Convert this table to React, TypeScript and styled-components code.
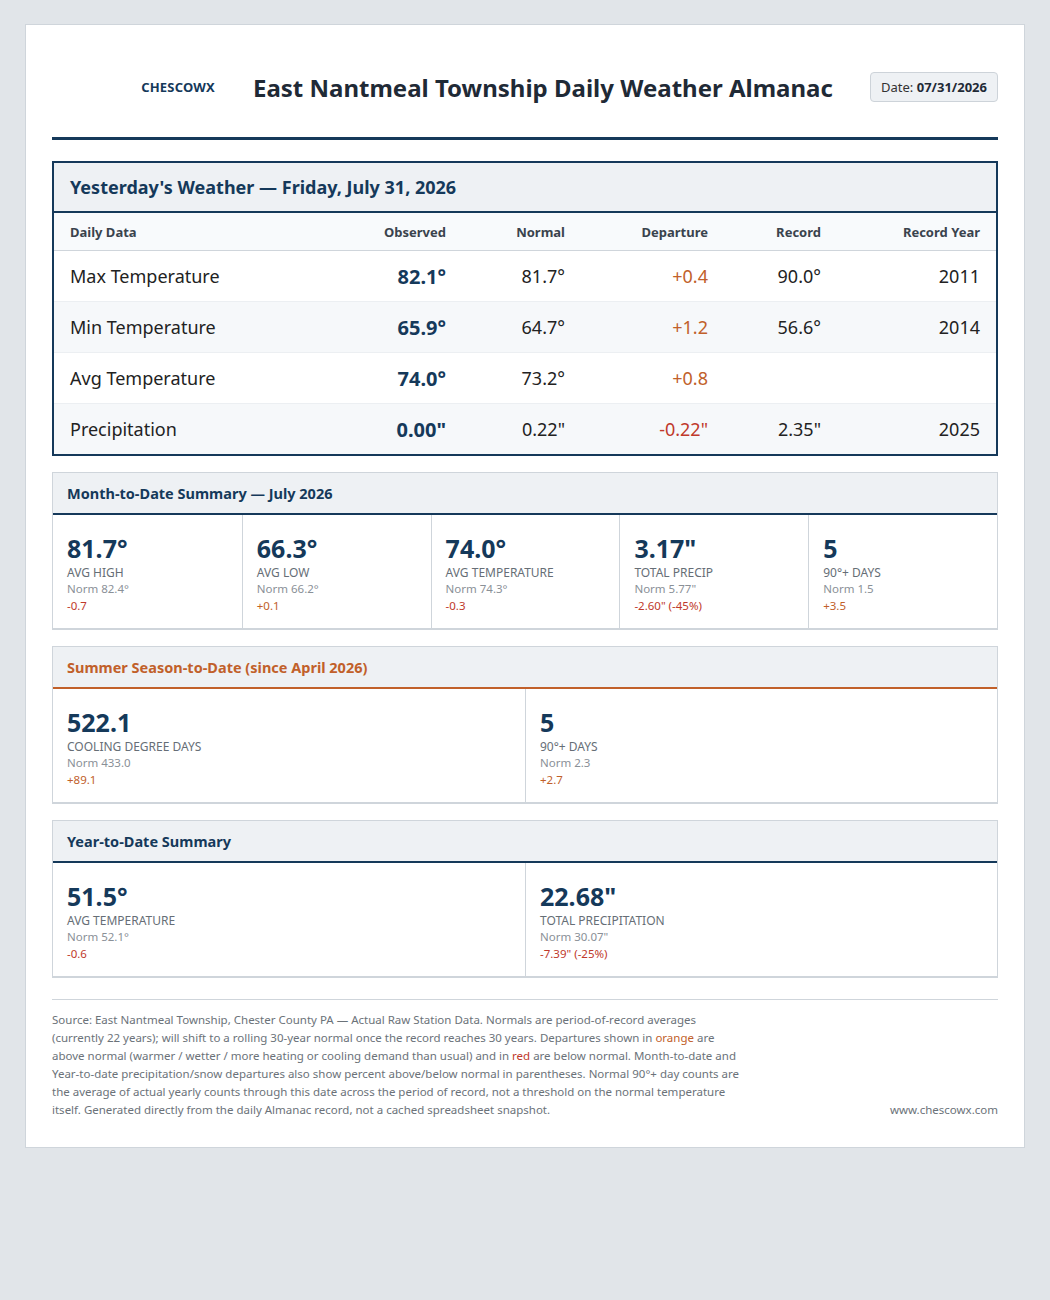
import React from "react";
import styled, { createGlobalStyle } from "styled-components";

const GlobalStyle = createGlobalStyle`
  body {
    margin: 0;
    background: #e1e5e9;
    font-family: "Noto Sans", "Open Sans", sans-serif;
    color: #1f2a36;
  }
`;

const NAVY = "#15395a";
const ORANGE = "#c1602a";
const RED = "#c0392b";

const Page = styled.div`
  padding: 24px 25px 150px;
`;

const Card = styled.div`
  background: #fff;
  border: 1px solid #cfd5db;
  padding: 28px 26px 28px 26px;
`;

const Header = styled.header`
  display: flex;
  align-items: center;
  padding-bottom: 16px;
  border-bottom: 3px solid ${NAVY};
  margin-bottom: 21px;
`;

const Logo = styled.div`
  width: 163px;
  height: 68px;
  display: flex;
  align-items: center;
  justify-content: flex-end;
  font-size: 13px;
  font-weight: 700;
  color: ${NAVY};
  letter-spacing: 0.2px;
`;

const Title = styled.h1`
  flex: 1;
  margin: 0 0 0 38px;
  font-size: 24px;
  font-weight: 700;
  color: #1f2a36;
`;

const DateBadge = styled.div`
  background: #eef1f4;
  border: 1px solid #cdd3d9;
  border-radius: 4px;
  padding: 5px 10px;
  font-size: 13px;
  color: #333;
  b {
    color: #1f2a36;
  }
`;

const Box = styled.section<{ $strong?: boolean }>`
  border: ${(p) => (p.$strong ? `2px solid ${NAVY}` : "1px solid #cfd5db")};
  ${(p) => (p.$strong ? "" : "border-bottom-width: 2px;")}
  margin-bottom: 16px;
`;

const BoxHead = styled.div<{ $accent: string; $big?: boolean }>`
  background: #eef1f4;
  border-bottom: 2px solid ${(p) => p.$accent};
  color: ${(p) => p.$accent};
  font-weight: 700;
  font-size: ${(p) => (p.$big ? "18px" : "14.5px")};
  line-height: ${(p) => (p.$big ? "25px" : "21px")};
  padding: ${(p) => (p.$big ? "12px 16px 11px" : "10px 14px 9px")};
`;

const TableGrid = styled.div`
  display: grid;
  grid-template-columns: 1fr 121px 119px 143px 113px 159px;
`;

const HeadCell = styled.div<{ $left?: boolean }>`
  background: #f8fafc;
  border-bottom: 1px solid #cfd5db;
  font-size: 13px;
  font-weight: 700;
  color: #3a434d;
  padding: 10px 16px 9px;
  text-align: ${(p) => (p.$left ? "left" : "right")};
`;

const Cell = styled.div<{ $left?: boolean; $alt?: boolean; $color?: string; $bold?: boolean; $last?: boolean }>`
  background: ${(p) => (p.$alt ? "#f6f8fa" : "#fff")};
  border-bottom: ${(p) => (p.$last ? "none" : "1px solid #eceff2")};
  height: 50px;
  padding: 0 16px;
  display: flex;
  align-items: center;
  justify-content: ${(p) => (p.$left ? "flex-start" : "flex-end")};
  font-size: ${(p) => (p.$bold ? "20px" : "18px")};
  font-weight: ${(p) => (p.$bold ? 700 : 400)};
  color: ${(p) => p.$color || "#222"};
`;

const Stats = styled.div<{ $cols: number }>`
  display: grid;
  grid-template-columns: repeat(${(p) => p.$cols}, 1fr);
`;

const Stat = styled.div`
  padding: 18px 14px 13px;
  border-left: 1px solid #cfd5db;
  &:first-child {
    border-left: none;
  }
`;

const Value = styled.div`
  font-size: 25px;
  font-weight: 700;
  color: ${NAVY};
  line-height: 30px;
`;

const Label = styled.div`
  font-size: 12px;
  color: #666e76;
  text-transform: uppercase;
  line-height: 16px;
  margin-top: 2px;
`;

const Norm = styled.div`
  font-size: 11.5px;
  color: #8a9097;
  line-height: 16px;
`;

const Dep = styled.div<{ $color: string }>`
  font-size: 11.5px;
  color: ${(p) => p.$color};
  line-height: 18px;
`;

const Footer = styled.footer`
  border-top: 1px solid #cfd5db;
  margin-top: 21px;
  padding-top: 11px;
  display: flex;
  justify-content: space-between;
  align-items: flex-end;
`;

const Note = styled.p`
  margin: 0;
  max-width: 688px;
  font-size: 11.5px;
  line-height: 18px;
  color: #6b7279;
`;

const Site = styled.div`
  font-size: 11.5px;
  color: #6b7279;
  line-height: 18px;
`;

const Hi = styled.span<{ $color: string }>`
  color: ${(p) => p.$color};
`;

type Row = { label: string; obs: string; norm: string; dep: string; rec: string; year: string };

const rows: Row[] = [
  { label: "Max Temperature", obs: "82.1°", norm: "81.7°", dep: "+0.4", rec: "90.0°", year: "2011" },
  { label: "Min Temperature", obs: "65.9°", norm: "64.7°", dep: "+1.2", rec: "56.6°", year: "2014" },
  { label: "Avg Temperature", obs: "74.0°", norm: "73.2°", dep: "+0.8", rec: "", year: "" },
  { label: "Precipitation", obs: '0.00"', norm: '0.22"', dep: '-0.22"', rec: '2.35"', year: "2025" },
];

type S = { value: string; label: string; norm: string; dep: string };

const depColor = (d: string) => (d.startsWith("-") ? RED : ORANGE);

const month: S[] = [
  { value: "81.7°", label: "Avg High", norm: "Norm 82.4°", dep: "-0.7" },
  { value: "66.3°", label: "Avg Low", norm: "Norm 66.2°", dep: "+0.1" },
  { value: "74.0°", label: "Avg Temperature", norm: "Norm 74.3°", dep: "-0.3" },
  { value: '3.17"', label: "Total Precip", norm: 'Norm 5.77"', dep: '-2.60" (-45%)' },
  { value: "5", label: "90°+ Days", norm: "Norm 1.5", dep: "+3.5" },
];

const season: S[] = [
  { value: "522.1", label: "Cooling Degree Days", norm: "Norm 433.0", dep: "+89.1" },
  { value: "5", label: "90°+ Days", norm: "Norm 2.3", dep: "+2.7" },
];

const year: S[] = [
  { value: "51.5°", label: "Avg Temperature", norm: "Norm 52.1°", dep: "-0.6" },
  { value: '22.68"', label: "Total Precipitation", norm: 'Norm 30.07"', dep: '-7.39" (-25%)' },
];

const StatGrid = ({ items }: { items: S[] }) => (
  <Stats $cols={items.length}>
    {items.map((s) => (
      <Stat key={s.label}>
        <Value>{s.value}</Value>
        <Label>{s.label}</Label>
        <Norm>{s.norm}</Norm>
        <Dep $color={depColor(s.dep)}>{s.dep}</Dep>
      </Stat>
    ))}
  </Stats>
);

const App = () => {
  return (
    <Page>
      <GlobalStyle />
      <Card>
        <Header>
          <Logo>CHESCOWX</Logo>
          <Title>East Nantmeal Township Daily Weather Almanac</Title>
          <DateBadge>
            Date: <b>07/31/2026</b>
          </DateBadge>
        </Header>

        <Box $strong>
          <BoxHead $accent={NAVY} $big>
            Yesterday's Weather — Friday, July 31, 2026
          </BoxHead>
          <TableGrid>
            <HeadCell $left>Daily Data</HeadCell>
            <HeadCell>Observed</HeadCell>
            <HeadCell>Normal</HeadCell>
            <HeadCell>Departure</HeadCell>
            <HeadCell>Record</HeadCell>
            <HeadCell>Record Year</HeadCell>
            {rows.map((r, i) => {
              const alt = i % 2 === 1;
              const last = i === rows.length - 1;
              return (
                <React.Fragment key={r.label}>
                  <Cell $left $alt={alt} $last={last}>{r.label}</Cell>
                  <Cell $alt={alt} $last={last} $bold $color={NAVY}>{r.obs}</Cell>
                  <Cell $alt={alt} $last={last}>{r.norm}</Cell>
                  <Cell $alt={alt} $last={last} $color={depColor(r.dep)}>{r.dep}</Cell>
                  <Cell $alt={alt} $last={last}>{r.rec}</Cell>
                  <Cell $alt={alt} $last={last}>{r.year}</Cell>
                </React.Fragment>
              );
            })}
          </TableGrid>
        </Box>

        <Box>
          <BoxHead $accent={NAVY}>Month-to-Date Summary — July 2026</BoxHead>
          <StatGrid items={month} />
        </Box>

        <Box>
          <BoxHead $accent={ORANGE}>Summer Season-to-Date (since April 2026)</BoxHead>
          <StatGrid items={season} />
        </Box>

        <Box>
          <BoxHead $accent={NAVY}>Year-to-Date Summary</BoxHead>
          <StatGrid items={year} />
        </Box>

        <Footer>
          <Note>
            Source: East Nantmeal Township, Chester County PA — Actual Raw Station Data. Normals are
            period-of-record averages (currently 22 years); will shift to a rolling 30-year normal once the
            record reaches 30 years. Departures shown in <Hi $color={ORANGE}>orange</Hi> are above normal
            (warmer / wetter / more heating or cooling demand than usual) and in <Hi $color={RED}>red</Hi> are
            below normal. Month-to-date and Year-to-date precipitation/snow departures also show percent
            above/below normal in parentheses. Normal 90°+ day counts are the average of actual yearly counts
            through this date across the period of record, not a threshold on the normal temperature itself.
            Generated directly from the daily Almanac record, not a cached spreadsheet snapshot.
          </Note>
          <Site>www.chescowx.com</Site>
        </Footer>
      </Card>
    </Page>
  );
};

export default App;
